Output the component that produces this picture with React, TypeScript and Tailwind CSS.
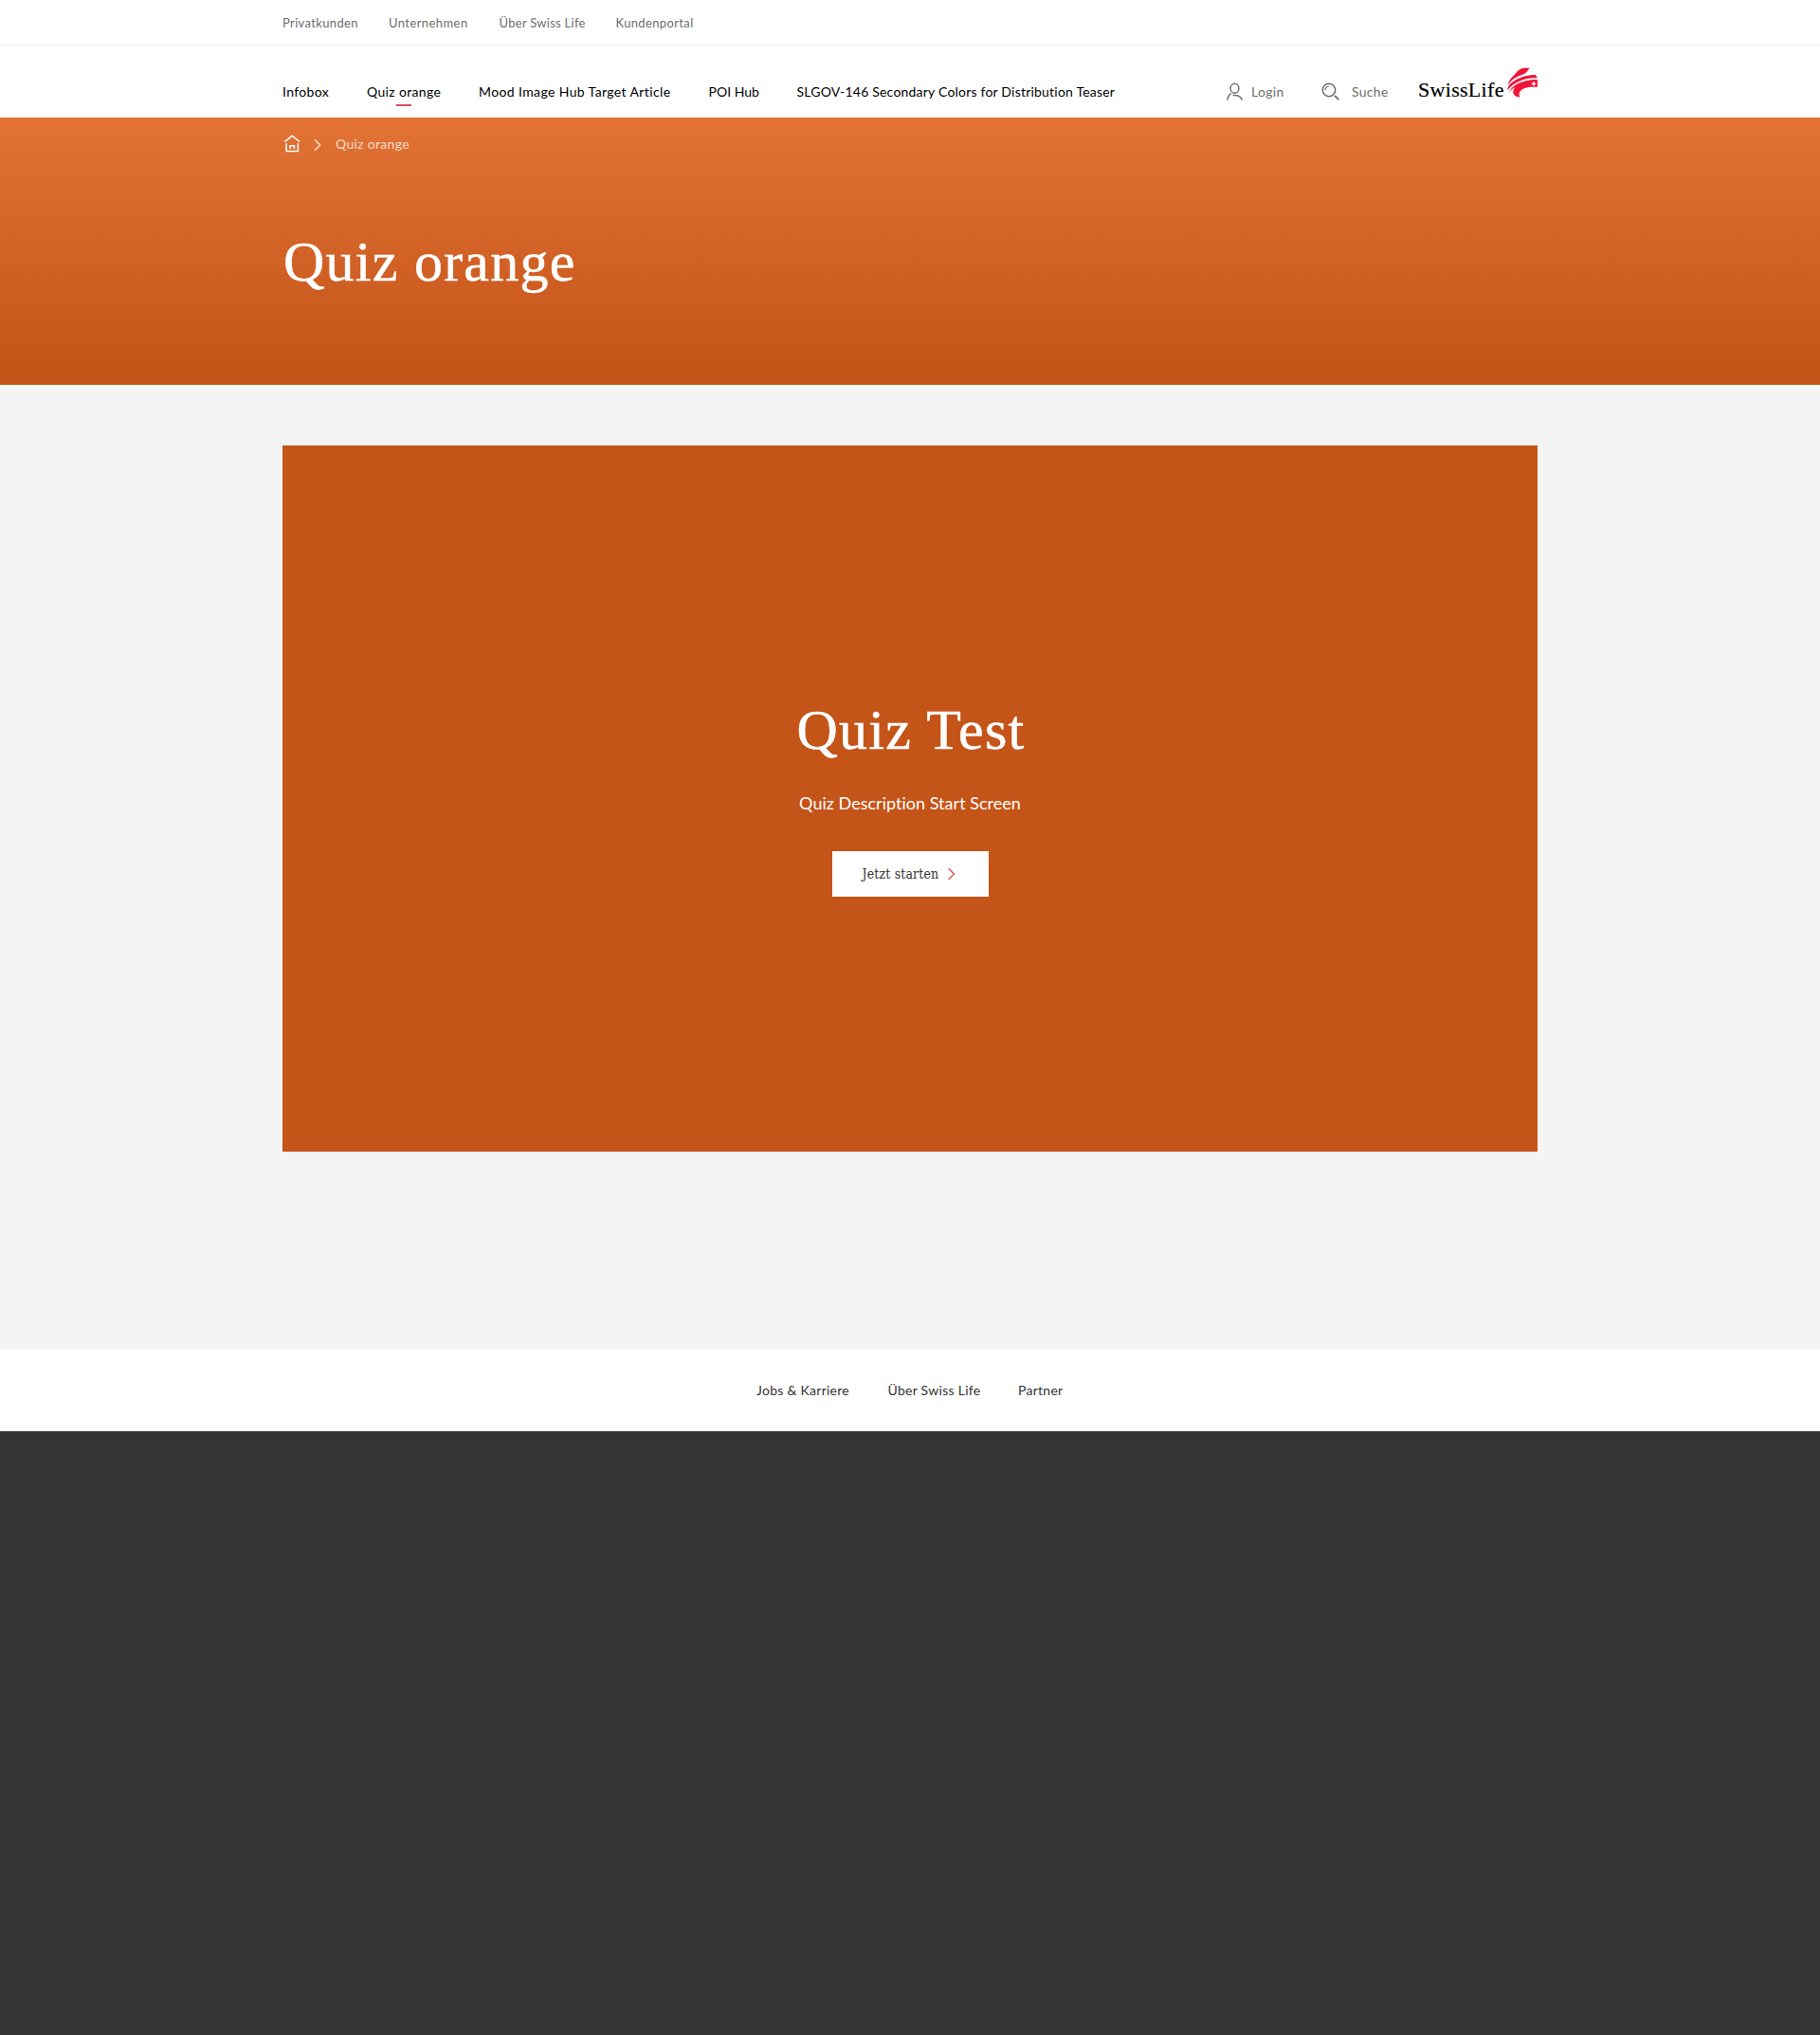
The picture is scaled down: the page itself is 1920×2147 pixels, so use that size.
const metaLinks = [
  { label: "Privatkunden", box: "w-[80px]", track: "tracking-[0.36px]" },
  { label: "Unternehmen", box: "w-[84.5px]", track: "tracking-[0.42px]" },
  { label: "Über Swiss Life", box: "w-[91px]", track: "tracking-[0.27px]" },
  { label: "Kundenportal", box: "w-[83px]", track: "tracking-[0.36px]" },
];

const mainLinks = [
  { label: "Infobox", box: "w-[49px]", track: "tracking-[0.35px]", active: false },
  { label: "Quiz orange", box: "w-[78px]", track: "tracking-[0.35px]", active: true },
  { label: "Mood Image Hub Target Article", box: "w-[202.500px]", track: "tracking-[0.38px]", active: false },
  { label: "POI Hub", box: "w-[53px]", track: "tracking-[0.02px]", active: false },
  { label: "SLGOV-146 Secondary Colors for Distribution Teaser", box: "w-[336px]", track: "tracking-[0.21px]", active: false },
];

const footerLinks = [
  { label: "Jobs & Karriere", box: "w-[98px]" },
  { label: "Über Swiss Life", box: "w-[97px]" },
  { label: "Partner", box: "w-[48px]" },
];

function LoginIcon() {
  return (
    <svg className="h-[20px] w-[18px] shrink-0" viewBox="0 0 18 20" fill="none" stroke="#6e6e6e" strokeWidth="1.5">
      <ellipse cx="8.500" cy="6.300" rx="4.400" ry="5" />
      <path d="M.9 18.700c.3-3.200 1.500-5.600 3.900-7" />
      <path d="M6.700 13.800c.7-.3 1.600-.4 2.400-.3 4 .2 6.600 2.100 7 5.200" />
    </svg>
  );
}

function SearchIcon() {
  return (
    <svg className="h-[20px] w-[20px] shrink-0" viewBox="0 0 20 20" fill="none" stroke="#6e6e6e">
      <circle cx="8" cy="8" r="6.700" strokeWidth="1.500" />
      <path d="M4.200 8.100c0-2.200 1.500-3.900 3.700-4.100" strokeWidth="1.200" />
      <path d="M14 13.900l4.300 4.300" strokeWidth="1.900" />
    </svg>
  );
}

function HomeIcon() {
  return (
    <svg className="h-[20px] w-[18px] shrink-0" viewBox="0 0 18 20" fill="none" stroke="#fff" strokeWidth="1.500">
      <path d="M2.300 7.700L10.200 1.200l7.900 6.500" />
      <path d="M4.100 9.200v8.200h12.300V9.200" />
      <path d="M8 15v-3.300h4.400V15" />
    </svg>
  );
}

function Logo() {
  return (
    <div className="flex h-[34px] w-[126px] items-start">
      <span className="mt-[10px] w-[94px] whitespace-nowrap font-['Liberation_Serif',serif] text-[22px] leading-[28px] text-black [-webkit-text-stroke:0.2px_black]">
        SwissLife
      </span>
      <svg className="h-[32.333px] w-[32px] shrink-0" viewBox="138 15 96 97">
        <path
          fill="#f0163a"
          d="M140 72C143 52 157 44 166 33 173 23 182 17 194 17H209C202 25 199 32 191 37 172 43 153 52 140 72Z"
        />
        <path fill="#f0163a" d="M139 88C139 72 153 59 178 49 200 40 226 37 230 41L233 49C204 46 161 58 139 88Z" />
        <path
          fill="#f0163a"
          d="M143 97C151 72 178 56 233 53 235 61 235 69 233 78 211 75 190 79 181 89 174 97 175 103 179 110 162 109 155 100 157 90 158 84 161 80 166 77 155 81 148 88 143 97Z"
        />
        <path fill="#fff" d="M220 60h4v5h5v4h-5v5h-4v-5h-5v-4h5z" />
      </svg>
    </div>
  );
}

export default function App() {
  return (
    <div className="flex min-h-[2147px] flex-col bg-[#343434] font-['Lato',sans-serif]">
      <header className="bg-white">
        <div className="h-[48px] border-b border-[#f3f3f3]">
          <nav className="mx-auto flex w-[1324px] gap-8 pt-[14px]">
            {metaLinks.map((l) => (
              <a key={l.label} className={`${l.box} ${l.track} whitespace-nowrap text-[13px] leading-[20px] text-[#6e6e6e]`}>
                {l.label}
              </a>
            ))}
          </nav>
        </div>
        <div className="mx-auto flex h-[76px] w-[1324px] items-start">
          <nav className="flex gap-[40px] pt-[39px]">
            {mainLinks.map((l) => (
              <a key={l.label} className={`${l.box} ${l.track} flex flex-col items-center whitespace-nowrap text-[14px] leading-[20px] text-black`}>
                <span className="self-start">{l.label}</span>
                {l.active && <span className="mt-[3px] h-[2px] w-[16px] bg-[#d9515f]" />}
              </a>
            ))}
          </nav>
          <div className="ml-auto flex items-start text-[14px] leading-[20px] tracking-[0.3px] text-[#6e6e6e]">
            <a className="mt-[39px] flex w-[100px] gap-[8px]">
              <LoginIcon />
              <span>Login</span>
            </a>
            <a className="mt-[39px] flex w-[102px] gap-[12px]">
              <SearchIcon />
              <span>Suche</span>
            </a>
            <a className="mt-[23px]">
              <Logo />
            </a>
          </div>
        </div>
      </header>

      <section className="h-[282px] bg-linear-to-b from-[#e37235] to-[#c35216]">
        <div className="mx-auto w-[1324px] pt-[18px]">
          <div className="flex items-start text-white">
            <HomeIcon />
            <svg className="ml-[14px] mt-[4px] h-[14px] w-[10px]" viewBox="0 0 10 14" fill="none" stroke="#f8e3d7" strokeWidth="1.400">
              <path d="M1.900 1.200L7.700 7l-5.800 5.800" />
            </svg>
            <span className="ml-[14px] text-[14px] leading-[20px] tracking-[0.32px] text-[#f6dccd]">Quiz orange</span>
          </div>
          <h1 className="mt-[84px] pl-px font-['Liberation_Serif',serif] text-[60px] leading-[60px] tracking-[1.250px] text-white [-webkit-text-stroke:0.5px_white]">
            Quiz orange
          </h1>
        </div>
      </section>

      <main className="h-[1018px] bg-[#f4f4f4] pt-[64px]">
        <section className="mx-auto flex h-[745px] w-[1324px] flex-col items-center bg-[#c55418] pt-[270px] text-white">
          <h2 className="pl-[2px] font-['Liberation_Serif',serif] text-[60px] leading-[60px] tracking-[1.250px] [-webkit-text-stroke:0.5px_white]">
            Quiz Test
          </h2>
          <p className="mt-[33px] text-[18px] leading-[28px] tracking-[0.02px]">Quiz Description Start Screen</p>
          <button className="mt-[37px] flex h-[48px] w-[165px] items-center bg-white pl-[32px] text-[#333333]">
            <span className="w-[83px] whitespace-nowrap text-left font-['DejaVu_Serif_Condensed','DejaVu_Serif',serif] text-[14px] leading-[20px] tracking-[0.15px] [font-stretch:condensed]">
              Jetzt starten
            </span>
            <svg className="ml-[6px] h-[14px] w-[10px]" viewBox="0 0 10 14" fill="none" stroke="#d9515f" strokeWidth="1.400">
              <path d="M1.700 1.200L7.500 7l-5.800 5.800" />
            </svg>
          </button>
        </section>
      </main>

      <footer className="flex h-[86px] items-start justify-center gap-[40.500px] bg-white pt-[33px]">
        {footerLinks.map((l) => (
          <a key={l.label} className={`${l.box} whitespace-nowrap text-[14px] leading-[20px] tracking-[0.27px] text-[#333333]`}>
            {l.label}
          </a>
        ))}
      </footer>
    </div>
  );
}
